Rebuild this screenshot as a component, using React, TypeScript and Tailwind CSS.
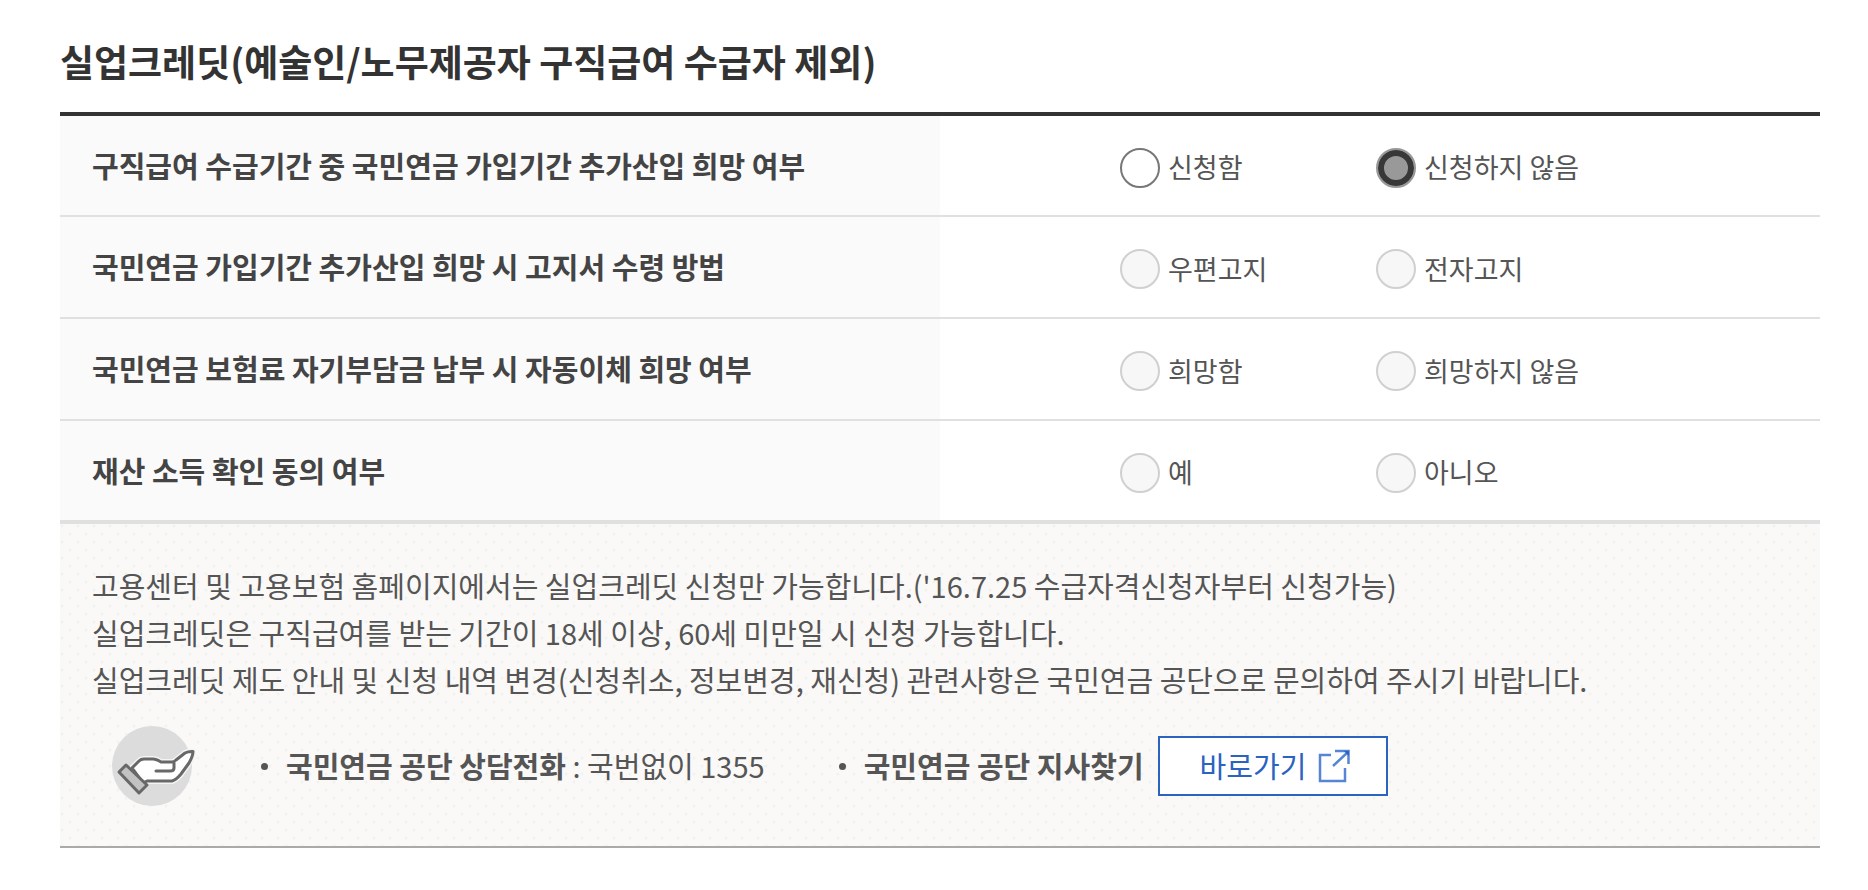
import { useState } from "react";

const rows = [
  {
    name: "credit",
    title: "구직급여 수급기간 중 국민연금 가입기간 추가산입 희망 여부",
    options: ["신청함", "신청하지 않음"],
    disabled: false,
  },
  {
    name: "notice",
    title: "국민연금 가입기간 추가산입 희망 시 고지서 수령 방법",
    options: ["우편고지", "전자고지"],
    disabled: true,
  },
  {
    name: "transfer",
    title: "국민연금 보험료 자기부담금 납부 시 자동이체 희망 여부",
    options: ["희망함", "희망하지 않음"],
    disabled: true,
  },
  {
    name: "agree",
    title: "재산 소득 확인 동의 여부",
    options: ["예", "아니오"],
    disabled: true,
  },
];

function HandIcon() {
  return (
    <svg width="84" height="80" viewBox="0 0 84 80" className="shrink-0" aria-hidden="true">
      <circle cx="40" cy="40" r="40" fill="#dcdcdc" />
      <g strokeLinejoin="round" strokeLinecap="round">
        <path
          d="M20 42L27 35Q29 33 32 33H41Q44 33 49 36H60Q62 36 64 34L73 27Q77 25 81 25.500Q81 30 77 37L69 48Q64 54 60 55H35L31 57Z"
          fill="#fff"
          stroke="#f4f4f4"
          strokeWidth="6"
        />
        <path
          d="M20 42L27 35Q29 33 32 33H41Q44 33 49 36H60Q62 36 64 34L73 27Q77 25 81 25.500Q81 30 77 37L69 48Q64 54 60 55H35L31 57Z"
          fill="#fff"
          stroke="#686868"
          strokeWidth="3"
        />
        <path d="M44 45H58Q62 45 62 42V37" fill="none" stroke="#686868" strokeWidth="3" />
        <path d="M14 39L35 59L27 67L7 46Z" fill="#c2c2c2" stroke="#686868" strokeWidth="3" />
      </g>
    </svg>
  );
}

function LinkIcon() {
  return (
    <svg width="32" height="34" viewBox="0 0 32 34" fill="none" stroke="#5585d4" strokeWidth="2.5" aria-hidden="true">
      <path d="M13 6H2V32H27V19" />
      <path d="M17 2H30.500V15M30 3L15 17" />
      <path d="M26 2H31V7Z" fill="#2a63c0" stroke="none" />
    </svg>
  );
}

export default function App() {
  const [credit, setCredit] = useState("신청하지 않음");

  return (
    <main className="px-[60px] pt-[31px] pr-12 font-['Noto_Sans_CJK_KR',sans-serif] text-[29px] text-[#555]">
      <h1 className="text-[37px] leading-[60px] font-bold text-[#333]">
        실업크레딧(예술인/노무제공자 구직급여 수급자 제외)
      </h1>
      <table className="mt-[21px] w-full table-fixed border-collapse">
        <tbody className="border-t-4 border-b-4 border-t-[#333] border-b-[#e0e0e0]">
          {rows.map((row) => (
            <tr key={row.name} className="h-[102px] border-b-2 border-[#e0e0e0] last:border-b-0">
              <th scope="row" className="w-1/2 bg-[#fafafa] pl-8 text-left font-bold text-[#444]">
                {row.title}
              </th>
              <td className="pt-1 pl-[180px] text-[27px]">
                <div className="flex">
                  {row.options.map((option) => (
                    <label key={option} className="flex w-64 items-center gap-2 whitespace-nowrap">
                      <input
                        type="radio"
                        name={row.name}
                        disabled={row.disabled}
                        checked={row.name === "credit" && credit === option}
                        onChange={() => setCredit(option)}
                        className="size-10 shrink-0 appearance-none rounded-full border-2 border-[#777] bg-white checked:border-[#999] checked:bg-[#999] checked:inset-ring-6 checked:inset-ring-[#383838] disabled:border-[#d0d0d0] disabled:bg-[#f7f7f7]"
                      />
                      {option}
                    </label>
                  ))}
                </div>
              </td>
            </tr>
          ))}
        </tbody>
      </table>
      <section className="border-b-2 border-[#aaa] bg-[#faf9f8] bg-[radial-gradient(circle_at_2px_2px,#f2f2f1_1px,transparent_2px),radial-gradient(circle_at_10px_10px,#f2f2f1_1px,transparent_2px)] bg-size-[16px_16px] px-8 pt-[38px] pb-10">
        <div className="leading-[47px]">
          <p>고용센터 및 고용보험 홈페이지에서는 실업크레딧 신청만 가능합니다.('16.7.25 수급자격신청자부터 신청가능)</p>
          <p>실업크레딧은 구직급여를 받는 기간이 18세 이상, 60세 미만일 시 신청 가능합니다.</p>
          <p>실업크레딧 제도 안내 및 신청 내역 변경(신청취소, 정보변경, 재신청) 관련사항은 국민연금 공단으로 문의하여 주시기 바랍니다.</p>
        </div>
        <div className="mt-[23px] flex items-center pl-5">
          <HandIcon />
          <ul className="ml-[65px] flex items-center gap-[74px]">
            <li className="flex items-center">
              <span className="mr-[18px] size-[7px] rounded-full bg-[#555]" />
              <span>
                <strong>국민연금 공단 상담전화</strong> : 국번없이 1355
              </span>
            </li>
            <li className="flex items-center">
              <span className="mr-[18px] size-[7px] rounded-full bg-[#555]" />
              <strong>국민연금 공단 지사찾기</strong>
              <a
                href="#"
                className="ml-[14px] flex h-[60px] w-[230px] items-center gap-3 border-2 border-[#2a63c0] bg-white pl-10 text-[#2a63c0]"
              >
                바로가기
                <LinkIcon />
              </a>
            </li>
          </ul>
        </div>
      </section>
    </main>
  );
}
